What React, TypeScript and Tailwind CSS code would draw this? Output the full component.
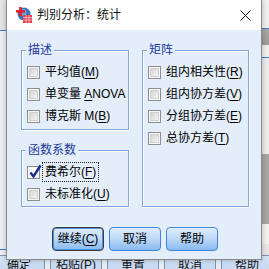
import React from "react";

type ItemProps = { pre: string; k: string; post: string; checked?: boolean; focus?: boolean };

function Box({ checked }: { checked?: boolean }) {
  return (
    <span className="relative w-[13px] h-[13px] border border-[#8e8e8e] bg-[#f7f7f7] flex items-center justify-center shrink-0">
      {!checked && <span className="w-[9px] h-[9px] border border-[#d0d0d0] bg-gradient-to-br from-[#d4d4d4] to-[#f5f5f5]" />}
      {checked && (
        <svg className="absolute left-[0px] top-[-3px]" width="14" height="15" viewBox="0 0 14 15">
          <path d="M2.5 8.5 L5.5 12.5 L12.5 1.5" stroke="#1a2a8e" strokeWidth="2.4" fill="none" />
        </svg>
      )}
    </span>
  );
}

function Item({ pre, k, post, checked, focus }: ItemProps) {
  return (
    <div className="flex items-center h-[22px] pl-[5px] gap-[4px]">
      <Box checked={checked} />
      <span
        className={`leading-[16px] whitespace-nowrap px-[1px] ${
          focus ? "outline outline-1 outline-dotted outline-[#222] outline-offset-[1px]" : ""
        }`}
      >
        {pre}
        <span className="underline underline-offset-[2px]">{k}</span>
        {post}
      </span>
    </div>
  );
}

function Group({ title, className, children }: { title: string; className: string; children: React.ReactNode }) {
  return (
    <div className={`relative border border-[#80a7d7] shadow-[1px_1px_0_#ffffff,inset_1px_1px_0_#ffffff] ${className}`}>
      <span className="absolute left-[4px] top-[-9px] px-[2px] bg-[#e4eefa] text-[#22389a] leading-[16px]">{title}</span>
      <div className="pt-[10px] flex flex-col">{children}</div>
    </div>
  );
}

function Btn({ label, def }: { label: React.ReactNode; def?: boolean }) {
  return (
    <div
      className={`w-[52px] h-[24px] rounded-[4px] flex items-center justify-center leading-[16px] bg-gradient-to-b from-[#e0edfc] via-[#bcd7f7] to-[#86b9f0] ${
        def
          ? "border border-[#3b3b3b] shadow-[inset_0_0_0_1px_#4d8fe0]"
          : "border border-[#3f85d9]"
      }`}
    >
      {label}
    </div>
  );
}

function Icon() {
  return (
    <svg width="16" height="16" viewBox="0 0 16 16">
      <circle cx="8" cy="7" r="6.5" fill="#3a73bd" />
      <circle cx="7" cy="5.5" r="3.5" fill="#6fa3dc" />
      <rect x="7" y="8" width="9" height="8" fill="#e2384a" />
      <path d="M7 10.5 H16 M7 13 H16 M10 8 V16 M13 8 V16" stroke="#ffc9cf" strokeWidth="0.8" />
      <rect x="0" y="3" width="9" height="2.6" fill="#e21f26" />
      <rect x="3.2" y="0" width="2.6" height="9" fill="#e21f26" />
    </svg>
  );
}

function UnderBtn({ label }: { label: string }) {
  return (
    <div className="w-[52px] h-[24px] shrink-0 border border-[#7d93b1] bg-gradient-to-b from-[#d4e4f7] to-[#bcd3f0] flex justify-center pt-[1px] leading-[16px] text-[#111]">
      {label}
    </div>
  );
}

export default function App() {
  return (
    <div className="relative w-[269px] h-[269px] overflow-hidden flex flex-col bg-[#e9eef5] font-[Liberation_Sans,Noto_Sans_CJK_SC,sans-serif] text-[12px] text-black">
      <div className="flex h-[255px] shrink-0">
        <div className="w-[7px] flex flex-col">
          <div className="h-[30px] bg-[#e6e6e6]" />
          <div className="h-[1px] bg-[#3d7bcc]" />
          <div className="h-[218px] bg-[#eef0f3]" />
          <div className="h-[1px] bg-[#3d7bcc]" />
          <div className="flex-1 bg-[#eef0f3]" />
        </div>
        <div className="flex-1" />
        <div className="w-[8px] flex flex-col">
          <div className="h-[28px] bg-[#f0f0f0]" />
          <div className="h-[1px] bg-[#3d7bcc]" />
          <div className="h-[16px] bg-gradient-to-b from-[#a9a9a9] to-[#9a9a9a]" />
          <div className="h-[12px] bg-[#f0f0f0]" />
          <div className="h-[1px] bg-[#3d7bcc]" />
          <div className="h-[96px] bg-[#ececec]" />
          <div className="h-[70px] bg-[#a6a6a6]" />
          <div className="h-[20px] bg-[#f2f2f2]" />
          <div className="flex-1 bg-[#e6e6e6]" />
        </div>
      </div>
      <div className="flex gap-[5px] ml-[-7px] h-[14px] overflow-hidden">
        <UnderBtn label="确定" />
        <UnderBtn label="粘贴(P)" />
        <UnderBtn label="重置" />
        <UnderBtn label="取消" />
        <UnderBtn label="帮助" />
      </div>

      <div className="absolute left-[6px] top-0 w-[256px] h-[260px] flex flex-col border-x border-b border-[#8a8a8a] shadow-[0_0_6px_rgba(0,0,0,0.25)]">
        <div className="h-[30px] shrink-0 bg-white flex items-center">
          <div className="ml-[9px] w-[16px] h-[16px]">
            <Icon />
          </div>
          <span className="ml-[5px] leading-[16px] text-[#111]">判别分析：统计</span>
          <div className="ml-auto mr-[10px]">
            <svg width="11" height="11" viewBox="0 0 11 11">
              <path d="M0.5 0.5 L10.5 10.5 M10.5 0.5 L0.5 10.5" stroke="#111" strokeWidth="1" />
            </svg>
          </div>
        </div>
        <div className="flex-1 bg-[#e4eefa] flex flex-col">
          <div className="flex pt-[20px] pl-[14px]">
            <div className="w-[108px] flex flex-col">
              <Group title="描述" className="h-[80px]">
                <Item pre="平均值(" k="M" post=")" />
                <Item pre="单变量 " k="A" post="NOVA" />
                <Item pre="博克斯 M(" k="B" post=")" />
              </Group>
              <Group title="函数系数" className="h-[57px] mt-[20px]">
                <Item pre="费希尔(" k="F" post=")" checked focus />
                <Item pre="未标准化(" k="U" post=")" />
              </Group>
            </div>
            <div className="w-[107px] ml-[13px]">
              <Group title="矩阵" className="h-[157px]">
                <Item pre="组内相关性(" k="R" post=")" />
                <Item pre="组内协方差(" k="V" post=")" />
                <Item pre="分组协方差(" k="E" post=")" />
                <Item pre="总协方差(" k="T" post=")" />
              </Group>
            </div>
          </div>
          <div className="flex gap-[5px] pl-[45px] mt-[20px]">
            <Btn def label={<span>继续(<span className="underline underline-offset-[2px]">C</span>)</span>} />
            <Btn label="取消" />
            <Btn label="帮助" />
          </div>
        </div>
      </div>
    </div>
  );
}
